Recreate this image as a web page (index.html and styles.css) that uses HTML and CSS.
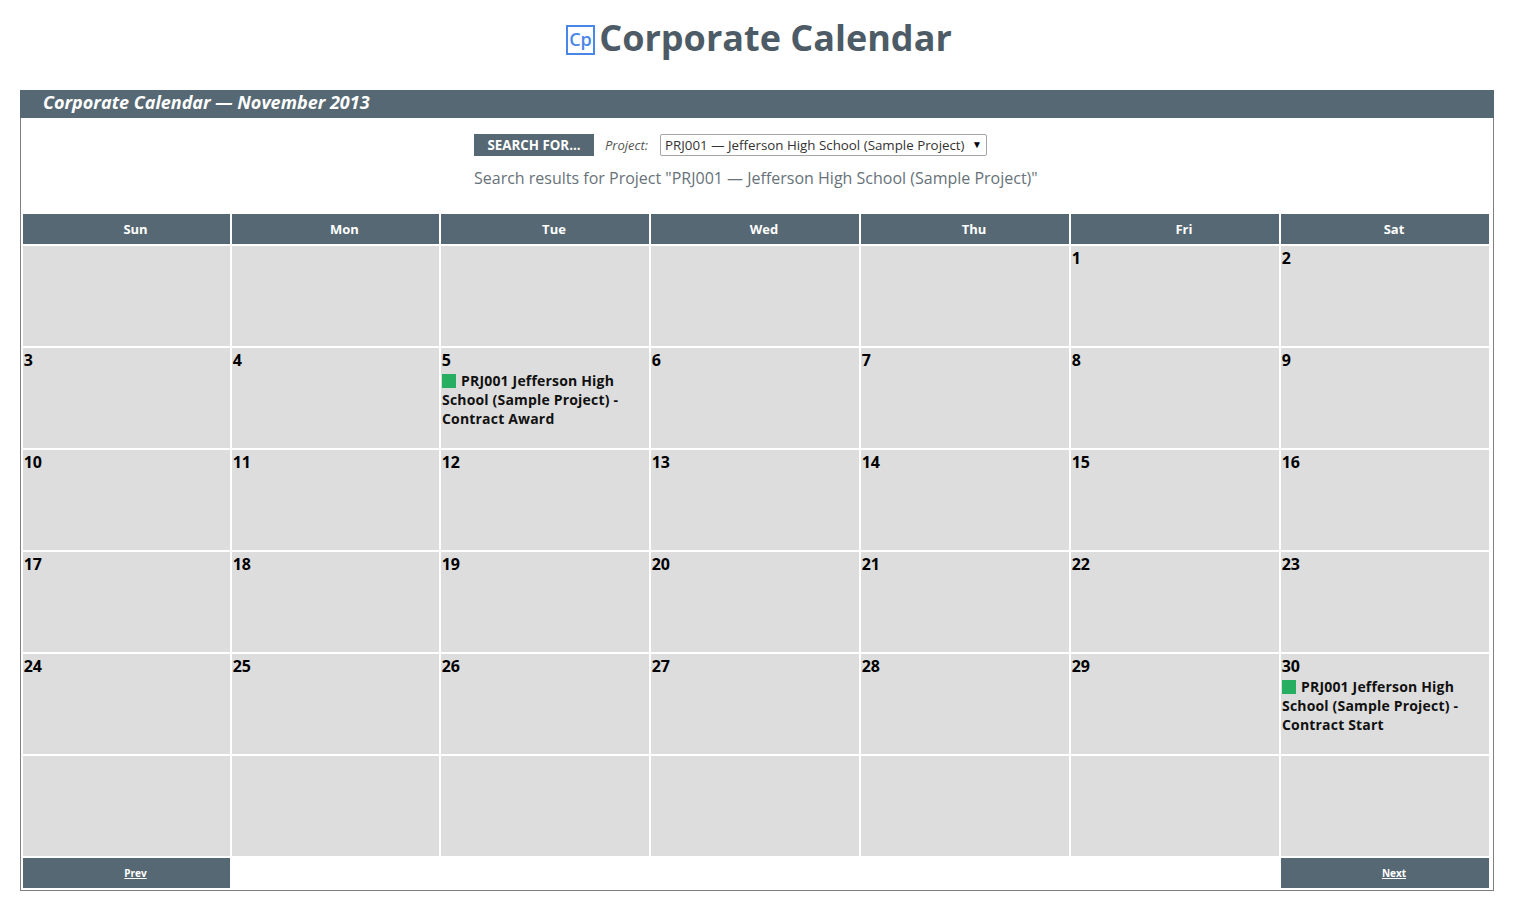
FILE: index.html
```html
<!DOCTYPE html>
<html lang="en">
<head>
<meta charset="utf-8">
<title>Corporate Calendar</title>
<link rel="stylesheet" href="styles.css">
</head>
<body>
<h1 class="page-title"><svg class="logo" width="29" height="30" viewBox="0 0 29 30"><rect x="1" y="1" width="27" height="28" fill="#fff" stroke="#4a86e8" stroke-width="2"/><text x="14.5" y="21" text-anchor="middle" class="logo-text">Cp</text></svg><span>Corporate Calendar</span></h1>
<section class="panel">
<h2 class="panel-title">Corporate Calendar — November 2013</h2>
<div class="search-row">
<span class="search-label">SEARCH FOR...</span>
<em class="field-label">Project:</em>
<div class="select-box"><span>PRJ001 — Jefferson High School (Sample Project)</span><span class="arrow">▼</span></div>
</div>
<p class="results">Search results for Project "PRJ001 — Jefferson High School (Sample Project)"</p>
<div class="calendar">
<div class="head">Sun</div><div class="head">Mon</div><div class="head">Tue</div><div class="head">Wed</div><div class="head">Thu</div><div class="head">Fri</div><div class="head">Sat</div>
<div class="day"></div><div class="day"></div><div class="day"></div><div class="day"></div><div class="day"></div><div class="day"><b class="num">1</b></div><div class="day"><b class="num">2</b></div>
<div class="day"><b class="num">3</b></div><div class="day"><b class="num">4</b></div>
<div class="day"><b class="num">5</b><div class="event"><i class="swatch"></i>PRJ001 Jefferson High School (Sample Project) - Contract Award</div></div>
<div class="day"><b class="num">6</b></div><div class="day"><b class="num">7</b></div><div class="day"><b class="num">8</b></div><div class="day"><b class="num">9</b></div>
<div class="day"><b class="num">10</b></div><div class="day"><b class="num">11</b></div><div class="day"><b class="num">12</b></div><div class="day"><b class="num">13</b></div><div class="day"><b class="num">14</b></div><div class="day"><b class="num">15</b></div><div class="day"><b class="num">16</b></div>
<div class="day"><b class="num">17</b></div><div class="day"><b class="num">18</b></div><div class="day"><b class="num">19</b></div><div class="day"><b class="num">20</b></div><div class="day"><b class="num">21</b></div><div class="day"><b class="num">22</b></div><div class="day"><b class="num">23</b></div>
<div class="day"><b class="num">24</b></div><div class="day"><b class="num">25</b></div><div class="day"><b class="num">26</b></div><div class="day"><b class="num">27</b></div><div class="day"><b class="num">28</b></div><div class="day"><b class="num">29</b></div>
<div class="day"><b class="num">30</b><div class="event"><i class="swatch"></i>PRJ001 Jefferson High School (Sample Project) - Contract Start</div></div>
<div class="day"></div><div class="day"></div><div class="day"></div><div class="day"></div><div class="day"></div><div class="day"></div><div class="day"></div>
<div class="nav"><a href="#">Prev</a></div><div class="nav-gap"></div><div class="nav"><a href="#">Next</a></div>
</div>
</section>
</body>
</html>
```
FILE: styles.css
```css
* { box-sizing: border-box; }
html, body { margin: 0; padding: 0; }
body {
  background: #fff;
  font-family: "Open Sans", sans-serif;
  height: 897px;
  overflow: hidden;
}
.page-title {
  margin: 0;
  height: 90px;
  padding: 13px 0 0 2px;
  display: flex;
  justify-content: center;
  align-items: flex-start;
  gap: 4px;
  font-size: 36px;
  line-height: 49px;
  font-weight: 700;
  color: #4d5b66;
}
.logo { margin-top: 12px; flex: none; }
.logo-text { font: 600 18px "Open Sans", sans-serif; fill: #4a86e8; }
.panel {
  margin: 0 22px 0 20px;
  height: 801px;
  border: 1px solid #808080;
  border-top: 0;
}
.panel-title {
  margin: 0 -1px;
  height: 28px;
  padding-left: 23px;
  background: #566873;
  color: #fff;
  font-size: 18px;
  line-height: 24px;
  font-weight: 700;
  font-style: italic;
}
.search-row {
  display: flex;
  align-items: center;
  margin-top: 16px;
  margin-left: 453px;
  height: 22px;
}
.search-label {
  width: 120px;
  height: 22px;
  background: #566873;
  color: #fff;
  font-size: 13.33px;
  line-height: 22px;
  font-weight: 700;
  text-align: center;
}
.field-label {
  margin-left: 11px;
  width: 55px;
  font-size: 13px;
  color: #555;
}
.select-box {
  width: 327px;
  height: 22px;
  border: 1px solid #a6a6a6;
  border-radius: 2px;
  padding-left: 4px;
  display: flex;
  justify-content: space-between;
  font-size: 13.33px;
  line-height: 20px;
  color: #333;
}
.arrow { font-size: 10px; color: #000; margin-right: 4px; line-height: 18px; }
.results {
  margin: 10px 0 0 453px;
  height: 24px;
  font-size: 16px;
  line-height: 24px;
  color: #67727a;
}
.calendar {
  margin: 24px 0 0 2px;
  display: grid;
  grid-template-columns: 207px 207px 208px 208px 208px 208px 208px;
  grid-template-rows: 30px repeat(6, 100px) 30px;
  gap: 2px;
}
.head {
  background: #566873;
  color: #fff;
  padding-left: 18px;
  font-size: 13px;
  line-height: 30px;
  font-weight: 700;
  text-align: center;
}
.day {
  background: #ddd;
  padding: 2px 1px 1px;
  color: #111;
  overflow: hidden;
}
.num {
  display: block;
  margin-left: -0.3px;
  font-size: 16px;
  line-height: 21px;
  font-weight: 700;
  color: #000;
}
.event {
  font-size: 14px;
  line-height: 19px;
  font-weight: 700;
  letter-spacing: 0.18px;
}
.swatch {
  display: inline-block;
  width: 14px;
  height: 14px;
  margin-right: 5px;
  vertical-align: -2px;
  background: #27ae60;
}
.nav {
  background: #566873;
  padding-left: 18px;
  text-align: center;
  line-height: 30px;
  font-size: 10px;
  font-weight: 700;
}
.nav a { color: #fff; text-decoration: underline; }
.nav-gap { grid-column: span 5; }
```
